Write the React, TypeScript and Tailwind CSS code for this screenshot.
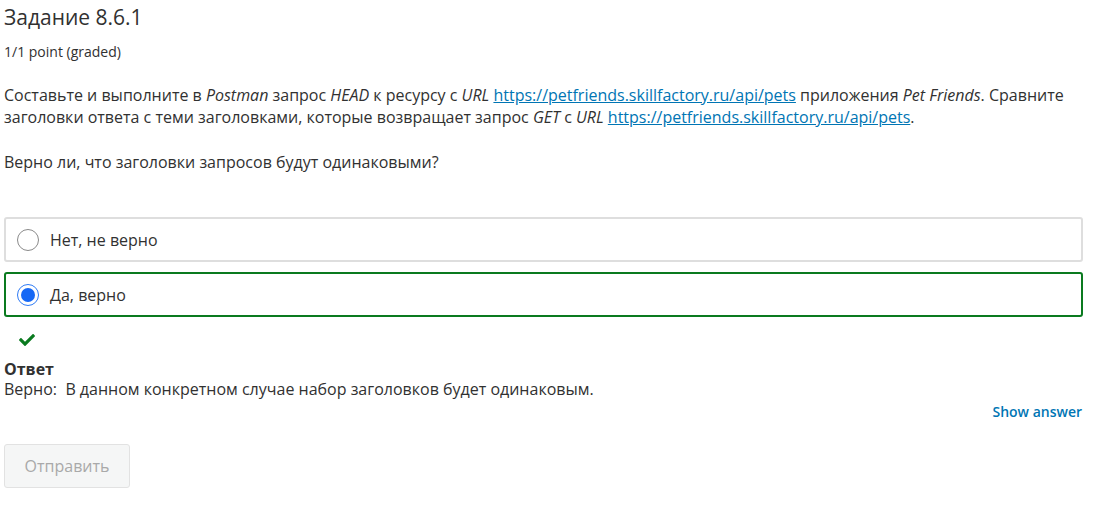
import { FaCheck } from "react-icons/fa";

const link = "text-[#0075b4] underline";

const Radio = ({ checked }: { checked: boolean }) =>
  checked ? (
    <span className="flex h-[22px] w-[22px] items-center justify-center rounded-full border border-[#2f7bf5] bg-white">
      <span className="h-[14px] w-[14px] rounded-full bg-[#1668f5]" />
    </span>
  ) : (
    <span className="h-[22px] w-[22px] rounded-full border border-[#8a8a8a] bg-white" />
  );

const Option = ({ label, checked }: { label: string; checked: boolean }) => (
  <div
    className={`flex h-[45px] items-center gap-[11px] rounded-[3px] border-2 pl-[11px] ${
      checked ? "border-[#0a7a1f]" : "border-[#dedede]"
    }`}
  >
    <Radio checked={checked} />
    <span className="text-[16px]">{label}</span>
  </div>
);

export default function App() {
  return (
    <div className="min-h-screen bg-white pl-[4px] pr-[12px] text-[#313131] [font-family:'Open_Sans',sans-serif]">
      <h2 className="pt-[3px] text-[21px] leading-[28px]">Задание 8.6.1</h2>
      <p className="mt-[12px] text-[14px] leading-[18px]">1/1 point (graded)</p>

      <p className="mt-[23px] text-[16px] leading-[22px]">
        Составьте и выполните в <em>Postman</em> запрос <em>HEAD</em> к ресурсу с <em>URL</em>{" "}
        <a className={link}>https://petfriends.skillfactory.ru/api/pets</a> приложения <em>Pet Friends</em>.
        Сравните заголовки ответа с теми заголовками, которые возвращает запрос <em>GET</em> с <em>URL</em>{" "}
        <a className={link}>https://petfriends.skillfactory.ru/api/pets</a>.
      </p>
      <p className="mt-[23px] text-[16px] leading-[22px]">Верно ли, что заголовки запросов будут одинаковыми?</p>

      <div className="mt-[44px] flex flex-col gap-[10px]">
        <Option label="Нет, не верно" checked={false} />
        <Option label="Да, верно" checked />
      </div>

      <div className="mt-[15px] pl-[15px] text-[#0a7a1f]">
        <FaCheck className="h-[16px] w-[16px]" />
      </div>

      <div className="mt-[11px] text-[16px] leading-[20px]">
        <div className="font-bold">Ответ</div>
        <div>Верно:&nbsp; В данном конкретном случае набор заголовков будет одинаковым.</div>
      </div>

      <div className="mt-[3px] flex justify-end pr-[1px]">
        <button className="text-[14px] font-semibold leading-[20px] text-[#0075b4]">Show answer</button>
      </div>

      <button className="mt-[22px] h-[44px] w-[126px] rounded-[3px] border border-[#e2e2e2] bg-[#f5f6f6] text-[16px] text-[#a9a9a9]">
        Отправить
      </button>
    </div>
  );
}
